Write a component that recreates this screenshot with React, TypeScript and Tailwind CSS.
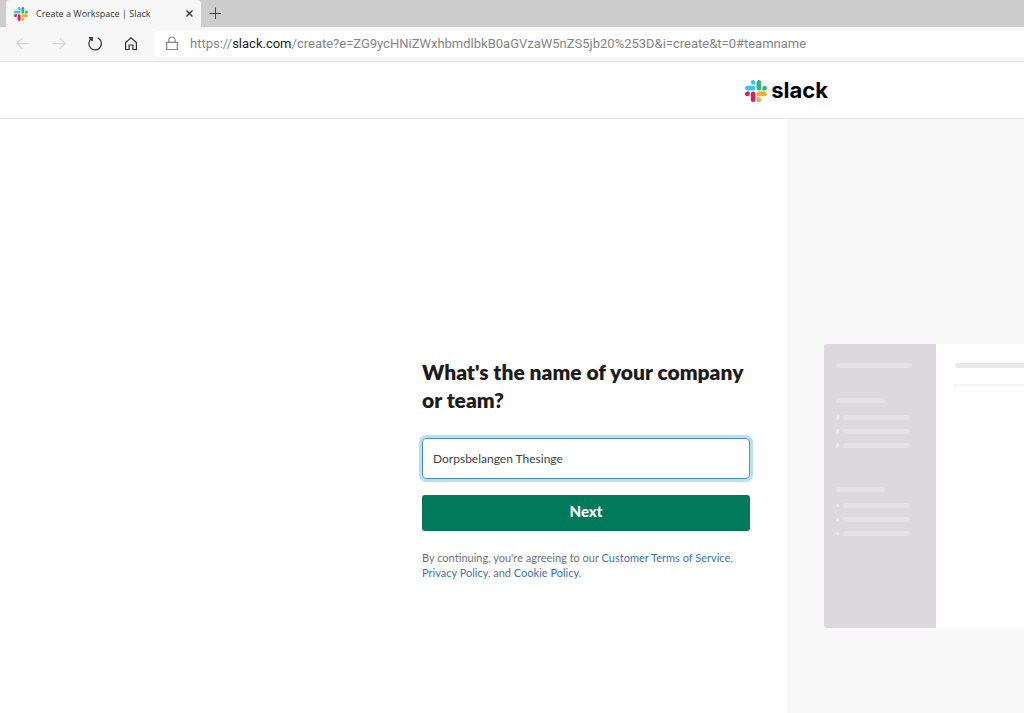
import clsx from "clsx";
import { useState } from "react";

function SlackMark({ className }: { className?: string }) {
	return (
		<svg viewBox="0 0 123 123" className={className} aria-hidden="true">
			<path
				fill="#E01E5A"
				d="M25.8 77.6c0 7.1-5.8 12.9-12.9 12.9S0 84.7 0 77.6s5.8-12.9 12.9-12.9h12.9v12.9zm6.5 0c0-7.1 5.8-12.9 12.9-12.9s12.9 5.8 12.9 12.9v32.3c0 7.1-5.8 12.9-12.9 12.9s-12.9-5.8-12.9-12.9V77.6z"
			/>
			<path
				fill="#36C5F0"
				d="M45.2 25.8c-7.1 0-12.9-5.8-12.9-12.9S38.1 0 45.2 0s12.9 5.8 12.9 12.9v12.9H45.2zm0 6.5c7.1 0 12.9 5.8 12.9 12.9s-5.8 12.9-12.9 12.9H12.9C5.8 58.1 0 52.3 0 45.2s5.8-12.9 12.9-12.9h32.3z"
			/>
			<path
				fill="#2EB67D"
				d="M97 45.2c0-7.1 5.8-12.9 12.9-12.9s12.9 5.8 12.9 12.9-5.8 12.9-12.9 12.9H97V45.2zm-6.5 0c0 7.1-5.8 12.9-12.9 12.9s-12.9-5.8-12.9-12.9V12.9C64.7 5.8 70.5 0 77.6 0s12.9 5.8 12.9 12.9v32.3z"
			/>
			<path
				fill="#ECB22E"
				d="M77.6 97c7.1 0 12.9 5.8 12.9 12.9s-5.8 12.9-12.9 12.9-12.9-5.8-12.9-12.9V97h12.9zm0-6.5c-7.1 0-12.9-5.8-12.9-12.9s5.8-12.9 12.9-12.9h32.3c7.1 0 12.9 5.8 12.9 12.9s-5.8 12.9-12.9 12.9H77.6z"
			/>
		</svg>
	);
}

function StrokeIcon({ d, size = 16 }: { d: string; size?: number }) {
	return (
		<svg
			width={size}
			height={size}
			viewBox="0 0 16 16"
			fill="none"
			stroke="currentColor"
			strokeWidth="1.2"
			aria-hidden="true"
		>
			<path d={d} />
		</svg>
	);
}

function TabStrip() {
	return (
		<div className="flex h-[27px] bg-[#cdcdcd] pl-[6px]">
			<div className="flex w-[195px] items-center rounded-t bg-[#f7f7f7] pr-1 pl-2">
				<SlackMark className="mr-2 h-[14px] w-[14px]" />
				<span className="flex-1 text-[9px] whitespace-nowrap text-[#333]">
					Create a Workspace | Slack
				</span>
				<button type="button" aria-label="Close tab" className="p-1 text-[#333]">
					<svg width="7" height="7" viewBox="0 0 7 7" className="block" aria-hidden="true">
						<path d="M.5.5l6 6M6.5.5l-6 6" stroke="currentColor" strokeWidth="1.4" />
					</svg>
				</button>
			</div>
			<button type="button" aria-label="New tab" className="ml-2 pb-[2px] text-[#444]">
				<svg width="12" height="12" viewBox="0 0 12 12" className="block" aria-hidden="true">
					<path d="M6.5 .5v12M.5 6.5h12" stroke="currentColor" strokeWidth="1" />
				</svg>
			</button>
		</div>
	);
}

function Toolbar() {
	return (
		<div className="flex h-[35px] items-center border-b border-[#e3e3e3] bg-[#f7f7f7] pl-[15px]">
			<div className="flex gap-5">
				<button type="button" aria-label="Back" disabled className="text-[#d5d5d5]">
					<StrokeIcon d="M14.5 7.5H2M7.2 2.2L1.9 7.5l5.3 5.3" />
				</button>
				<button type="button" aria-label="Forward" disabled className="text-[#d5d5d5]">
					<StrokeIcon d="M1.5 7.5H14M8.8 2.2l5.3 5.3-5.3 5.3" />
				</button>
				<button type="button" aria-label="Refresh" className="text-[#333]">
					<StrokeIcon d="M4.3 2.6A6.3 6.3 0 1 0 10.8 1.9M2 1.7h3.3v3.4M2.4 1.9l2.7 2.7" />
				</button>
				<button type="button" aria-label="Home" className="text-[#333]">
					<StrokeIcon d="M2.6 6.6L8 1.8l5.4 4.8v6.9H9.9V9H6.1v4.5H2.6z" />
				</button>
			</div>
			<div className="ml-[15px] flex h-[26px] flex-1 items-center rounded-l bg-white pl-[10px] text-[#858585]">
				<StrokeIcon d="M2.7 6.3h10.6v7.2H2.7zM4.9 6.3V4.1a3.1 3.1 0 0 1 6.2 0v2.2" />
				<p className="ml-[10px] font-['Roboto',sans-serif] text-[13px] whitespace-nowrap">
					https://<span className="text-[#222]">slack.com</span>
					/create?e=ZG9ycHNiZWxhbmdlbkB0aGVzaW5nZS5jb20%253D&amp;i=create&amp;t=0#teamname
				</p>
			</div>
		</div>
	);
}

function Bar({ className }: { className?: string }) {
	return <div className={clsx("h-[5px] rounded-full bg-[#e6e1e7]", className)} />;
}

function Channel({ hash }: { hash?: boolean }) {
	return (
		<div className="flex items-center gap-1">
			<div
				className={clsx(
					"w-[3px] rounded-full bg-[#ece8ec]",
					hash ? "h-[5px] -skew-x-12" : "h-[3px]",
				)}
			/>
			<Bar className="w-[67px]" />
		</div>
	);
}

function WorkspacePreview() {
	return (
		<div className="flex h-[284px] overflow-hidden rounded-l-xs bg-white">
			<div className="w-28 shrink-0 bg-[#ddd8dd] pt-[19px] pl-3">
				<Bar className="w-[76px]" />
				<Bar className="mt-[30px] w-[49px]" />
				<div className="mt-3 flex flex-col gap-[9px]">
					<Channel hash />
					<Channel hash />
					<Channel hash />
				</div>
				<Bar className="mt-[39px] w-[49px]" />
				<div className="mt-[11px] flex flex-col gap-[9px]">
					<Channel />
					<Channel />
					<Channel />
				</div>
			</div>
			<div className="flex-1 pt-[19px] pl-[17px]">
				<div className="ml-[2px] h-[5px] rounded-l-full bg-[#e8e8e8]" />
				<div className="mt-4 h-[2px] bg-[#f5f5f5]" />
			</div>
		</div>
	);
}

function TeamNameForm() {
	const [name, setName] = useState("Dorpsbelangen Thesinge");

	return (
		<form onSubmit={(e) => e.preventDefault()} className="w-[328px]">
			<label
				htmlFor="team-name"
				className="block text-[21px] leading-7 font-extrabold whitespace-nowrap text-[#1d1c1d]"
			>
				What's the name of your company
				<br />
				or team?
			</label>
			<input
				id="team-name"
				value={name}
				onChange={(e) => setName(e.target.value)}
				className="mt-6 block h-[41px] w-full rounded border border-[#4a90c4] px-[10px] text-[12px] text-[#454245] ring-3 ring-[#b9dff0] outline-none"
			/>
			<button
				type="submit"
				className="mt-4 block h-9 w-full rounded-[3px] bg-[#007a5a] pb-[3px] text-[15px] font-black text-white"
			>
				Next
			</button>
			<p className="mt-[19px] text-[11px] leading-[15px] text-[#717171]">
				By continuing, you're agreeing to our{" "}
				<a href="#terms" className="text-[#3b73af]">
					Customer Terms of Service
				</a>
				,{" "}
				<a href="#privacy" className="text-[#3b73af]">
					Privacy Policy
				</a>
				, and{" "}
				<a href="#cookies" className="text-[#3b73af]">
					Cookie Policy
				</a>
				.
			</p>
		</form>
	);
}

export default function App() {
	return (
		<div className="flex min-h-screen flex-col bg-white font-['Lato',sans-serif]">
			<div className="font-['Open_Sans',sans-serif]">
				<TabStrip />
				<Toolbar />
			</div>
			<header className="flex h-[57px] items-center justify-end border-b border-[#e2e2e2] pr-[196px]">
				<a href="#home" className="flex items-center gap-1 pt-px">
					<SlackMark className="h-[22px] w-[22px]" />
					<span className="pb-[2px] font-['Inter',sans-serif] text-[22px] leading-6 font-bold text-black">
						slack
					</span>
				</a>
			</header>
			<main className="grid flex-1 grid-cols-[787fr_237fr]">
				<section className="flex justify-end pt-[239px] pr-[37px]">
					<TeamNameForm />
				</section>
				<aside className="overflow-hidden bg-[#f8f8f8] pt-[225px] pl-[37px]">
					<WorkspacePreview />
				</aside>
			</main>
		</div>
	);
}
